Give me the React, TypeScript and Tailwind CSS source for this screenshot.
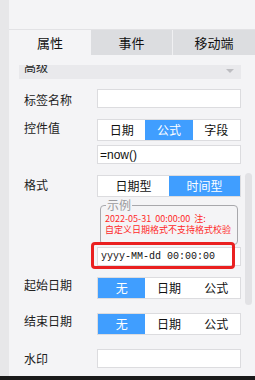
const cjk = { fontFamily: '"Noto Sans CJK SC", "Noto Sans", sans-serif' };

function Segmented({ items, active }: { items: string[]; active: number }) {
  return (
    <div className="flex w-[144px] h-[22px] border border-[#dcdcdf] bg-white">
      {items.map((it, i) => (
        <div
          key={it}
          className={
            "flex-1 flex items-center justify-center text-[12px] leading-none " +
            (i === active ? "bg-[#409eff] text-white" : "text-[#111]")
          }
        >
          {it}
        </div>
      ))}
    </div>
  );
}

function Input({ children, className = "" }: { children?: React.ReactNode; className?: string }) {
  return (
    <div className={"w-[144px] h-[19px] border border-[#dcdcdf] bg-white flex items-center px-[2px] " + className}>
      {children}
    </div>
  );
}

function Label({ text, className = "" }: { text: string; className?: string }) {
  return <div className={"w-[73px] shrink-0 text-[12px] leading-[16px] text-[#222] " + className}>{text}</div>;
}

export default function App() {
  return (
    <div className="w-[255px] h-[380px] flex flex-col overflow-hidden" style={cjk}>
      <div className="flex flex-1 min-h-0">
        <div className="w-[9px] shrink-0 bg-[#e7e7e9]" />
        <div className="relative flex-1 flex flex-col bg-[#f4f4f6]">
          <div className="h-[30px] shrink-0 border-b border-[#e2e2e5]" />
          <div className="flex h-[25px] shrink-0 text-[13px] text-[#111]">
            <div className="w-[82px] flex items-center justify-center bg-[#f4f4f6]">属性</div>
            <div className="w-[82px] flex items-center justify-center bg-[#dcdde0] border-r border-[#f0f0f2]">事件</div>
            <div className="flex-1 flex items-center justify-center bg-[#dcdde0]">移动端</div>
          </div>

          <div className="mt-[10px] ml-[10px] w-[222px] h-[14px] bg-[#e9e9ec] overflow-hidden flex items-start justify-between pl-[5px] pr-[7px]">
            <span className="text-[12px] leading-[12px] -mt-[4px] text-[#222]">高级</span>
            <span className="mt-[4px] w-0 h-0 border-l-[4px] border-r-[4px] border-t-[4px] border-l-transparent border-r-transparent border-t-[#bdbdc1]" />
          </div>

          <div className="flex flex-col pl-[15px]">
            <div className="flex items-center mt-[10px]">
              <Label text="标签名称" className="pt-[3px]" />
              <Input />
            </div>

            <div className="flex items-start mt-[11px]">
              <Label text="控件值" className="pt-[1px]" />
              <div className="flex flex-col gap-[4px]">
                <Segmented items={["日期", "公式", "字段"]} active={1} />
                <Input>
                  <span className="text-[12px] leading-none text-[#111]" style={{ fontFamily: '"Liberation Sans", sans-serif' }}>
                    =now()
                  </span>
                </Input>
              </div>
            </div>

            <div className="flex items-start mt-[11px]">
              <Label text="格式" className="pt-[2px]" />
              <div className="flex flex-col">
                <Segmented items={["日期型", "时间型"]} active={1} />
                <fieldset className="mt-[2px] ml-[3px] w-[138px] border border-[#a8a8ac] rounded-[4px] px-[4px] pt-[2px] pb-[9px]">
                  <legend className="ml-[1px] px-[1px] text-[12px] leading-[12px] text-[#9a9a9e]">示例</legend>
                  <div className="text-[9px] leading-[11px] text-[#ff2a2a] whitespace-pre">2022-05-31  00:00:00  注:</div>
                  <div className="text-[9px] leading-[11px] text-[#ff2a2a] whitespace-nowrap">自定义日期格式不支持格式校验</div>
                </fieldset>
                <Input className="mt-[2px] px-[3px]">
                  <span
                    className="text-[10px] leading-none text-[#111]"
                    style={{ fontFamily: '"Liberation Mono", "Noto Sans CJK SC", monospace' }}
                  >
                    yyyy-MM-dd 00:00:00
                  </span>
                </Input>
              </div>
            </div>

            <div className="flex items-start mt-[11px]">
              <Label text="起始日期" />
              <Segmented items={["无", "日期", "公式"]} active={0} />
            </div>

            <div className="flex items-start mt-[14px]">
              <Label text="结束日期" />
              <Segmented items={["无", "日期", "公式"]} active={0} />
            </div>

            <div className="flex items-center mt-[14px]">
              <Label text="水印" className="pt-[1px]" />
              <Input />
            </div>
          </div>

          <div className="absolute left-[82px] top-[242px] w-[144px] h-[27px] border-[3px] border-[#ea2020] rounded-[4px]" />
          <div className="absolute left-[236px] top-[173px] w-[7px] h-[132px] rounded-full bg-[#e2e2e5]" />
        </div>
      </div>
      <div className="h-[4px] shrink-0 bg-[#1a1a1a]" />
    </div>
  );
}
